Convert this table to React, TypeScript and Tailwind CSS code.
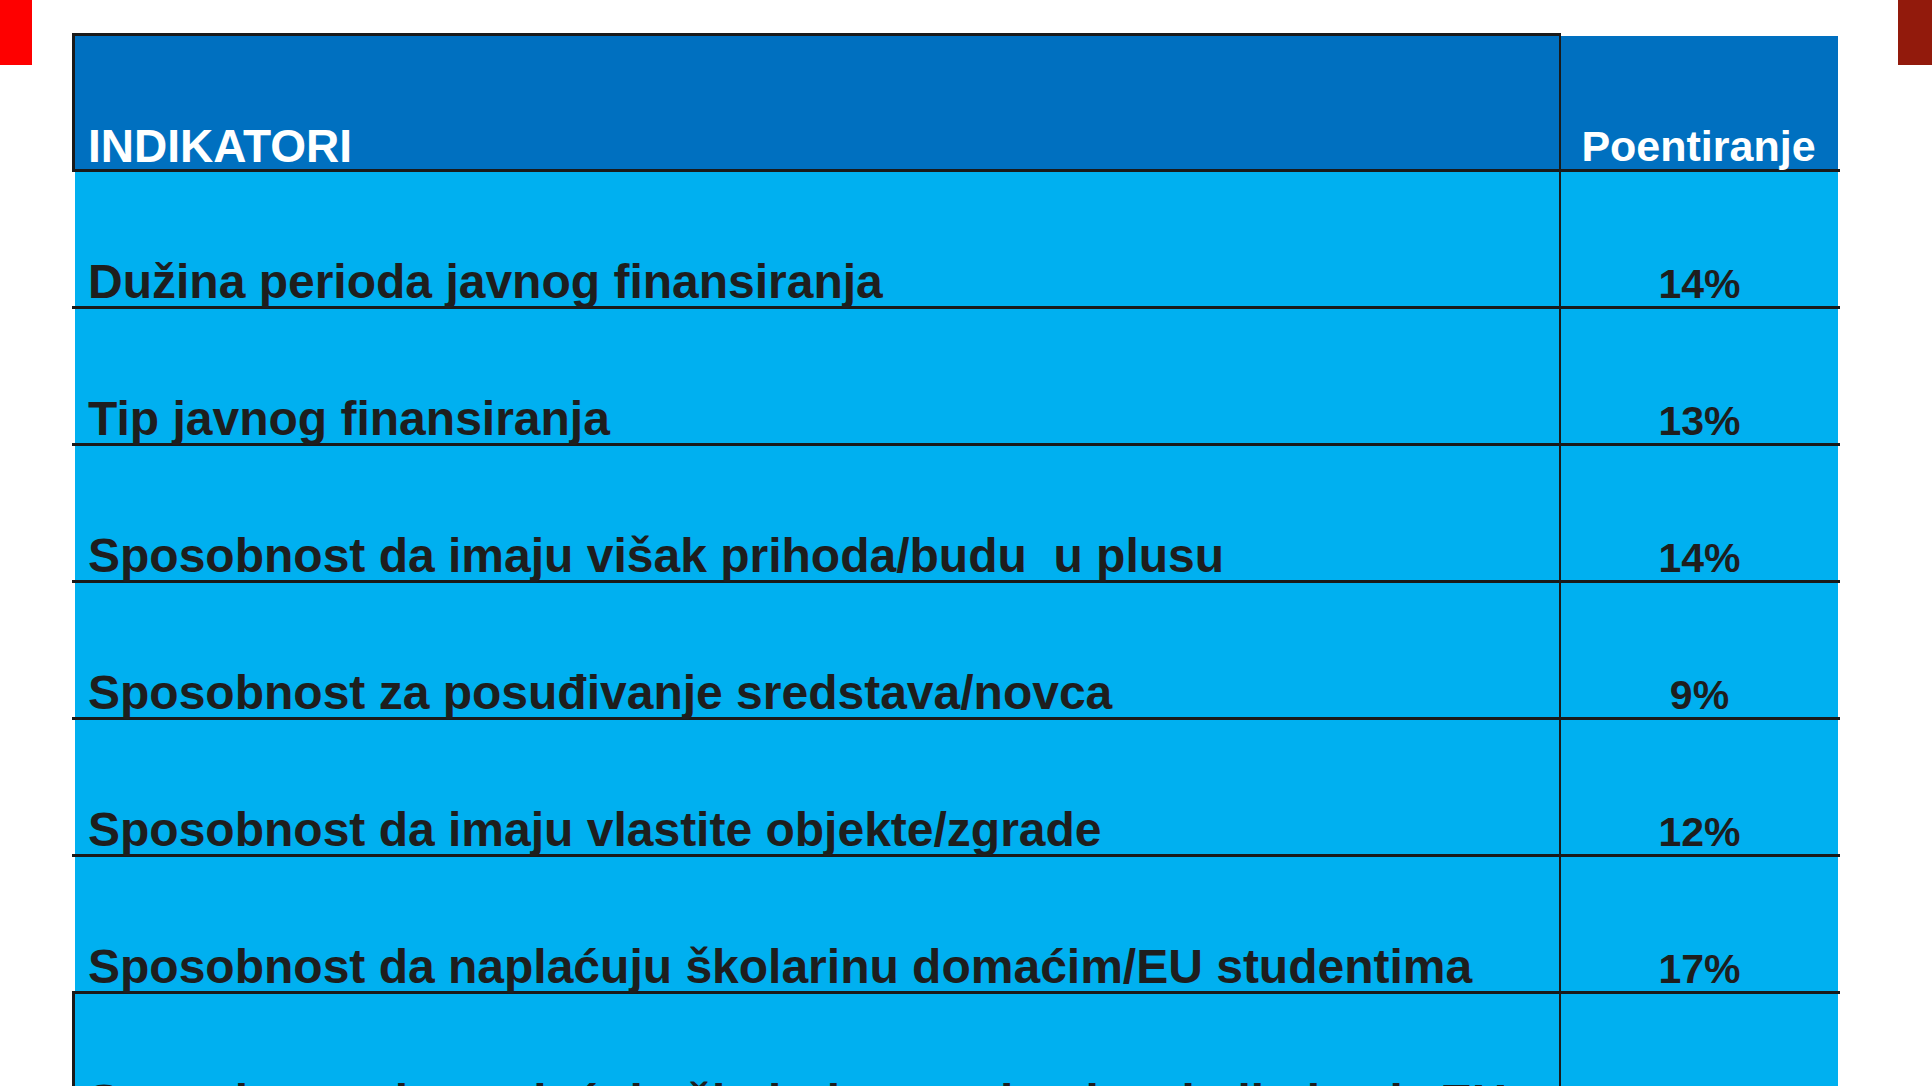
import React from "react";

interface Row {
  label: string;
  score: string;
  boxed?: boolean;
}

const rows: Row[] = [
  { label: "Dužina perioda javnog finansiranja", score: "14%" },
  { label: "Tip javnog finansiranja", score: "13%" },
  { label: "Sposobnost da imaju višak prihoda/budu  u plusu", score: "14%" },
  { label: "Sposobnost za posuđivanje sredstava/novca", score: "9%" },
  { label: "Sposobnost da imaju vlastite objekte/zgrade", score: "12%" },
  { label: "Sposobnost da naplaćuju školarinu domaćim/EU studentima", score: "17%" },
  { label: "Sposobnost da naplaćuju školarinu studentima koji nisu iz EU", score: "21%", boxed: true },
];

const App: React.FC = () => {
  return (
    <div
      className="w-[1932px] h-[1086px] overflow-hidden bg-white flex items-start font-bold"
      style={{ fontFamily: '"Liberation Sans", Arial, sans-serif' }}
    >
      <div className="w-[32px] h-[65px] shrink-0 bg-[#fe0000]" />

      <div className="ml-[40px] mt-[33px] w-[1768px] shrink-0 flex flex-col">
        {/* header */}
        <div className="flex h-[139px] border-b-[3px] border-[#1a1a1a]">
          <div className="flex-1 flex items-end pl-[13px] bg-[#0070c0] border-t-[3px] border-l-[3px] border-[#1a1a1a]">
            <span className="text-[46px] leading-none text-white">INDIKATORI</span>
          </div>
          <div className="w-[279px] mr-[2px] flex flex-col border-l-2 border-[#1a1a1a]">
            <div className="h-[3px] bg-white" />
            <div className="flex-1 flex items-end justify-center pb-[1px] pr-[2px] bg-[#0070c0]">
              <span className="text-[43px] leading-none text-white">Poentiranje</span>
            </div>
          </div>
        </div>

        {rows.map((r) => (
          <div key={r.label} className="flex h-[137px] shrink-0 border-b-[3px] border-[#1a1a1a]">
            <div
              className={
                r.boxed
                  ? "flex-1 flex items-end pl-[13px] pb-[2px] bg-[#00b0f0] border-l-[3px] border-[#1a1a1a]"
                  : "flex-1 flex items-end pl-[13px] ml-[3px] bg-[#00b0f0]"
              }
            >
              <span className="text-[48px] leading-none text-[#1e1e1e] whitespace-pre">{r.label}</span>
            </div>
            <div
              className={
                r.boxed
                  ? "w-[279px] mr-[2px] flex items-end justify-center pb-[4px] bg-[#00b0f0] border-l-2 border-[#1a1a1a]"
                  : "w-[279px] mr-[2px] flex items-end justify-center pb-[1px] bg-[#00b0f0] border-l-2 border-[#1a1a1a]"
              }
            >
              <span className="text-[41px] leading-none text-[#1e1e1e]">{r.score}</span>
            </div>
          </div>
        ))}
      </div>

      <div className="ml-auto w-[34px] h-[65px] shrink-0 bg-[#921a0c]" />
    </div>
  );
};

export default App;
